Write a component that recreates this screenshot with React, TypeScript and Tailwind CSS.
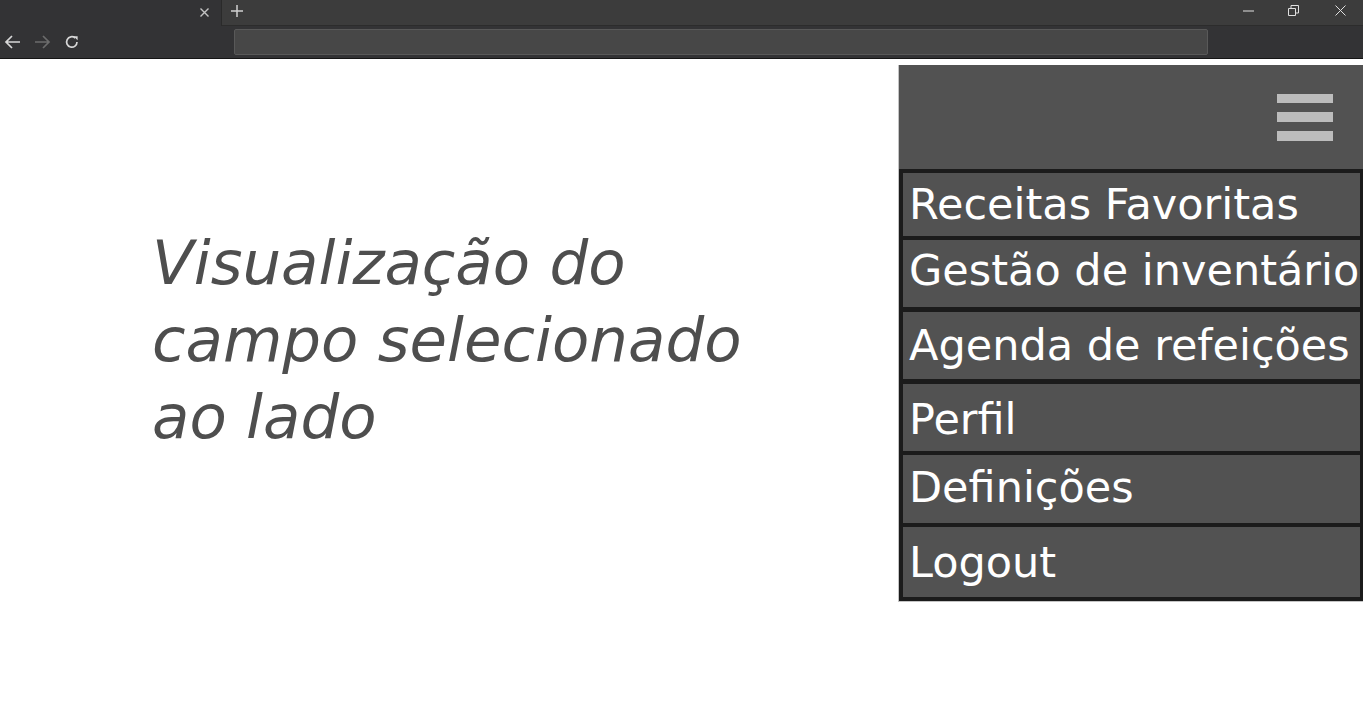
import React from "react";

const items: { label: string; h: string; pt: string; mt: string }[] = [
  { label: "Receitas Favoritas", h: "h-[63px]", pt: "pt-[6px]", mt: "" },
  { label: "Gestão de inventário", h: "h-[67px]", pt: "pt-[5px]", mt: "" },
  { label: "Agenda de refeições", h: "h-[67px]", pt: "pt-[8px]", mt: "mt-[1px]" },
  { label: "Perfil", h: "h-[67px]", pt: "pt-[10px]", mt: "mt-[1px]" },
  { label: "Definições", h: "h-[68px]", pt: "pt-[7px]", mt: "" },
  { label: "Logout", h: "h-[70px]", pt: "pt-[10px]", mt: "" },
];

function Chrome() {
  return (
    <div className="flex flex-col">
      <div className="flex h-[26px] bg-[#3c3c3c]">
        <div className="relative w-[222px] h-[26px] bg-[#333335] border-r border-[#2a2a2a]">
          <svg className="absolute left-[199px] top-[7px]" width="11" height="11" viewBox="0 0 11 11">
            <path d="M1.5 1.5 L9.5 9.5 M9.5 1.5 L1.5 9.5" stroke="#c4c4c4" strokeWidth="1.4" />
          </svg>
        </div>
        <div className="relative flex-1 border-b border-[#2c2c2c]">
          <svg className="absolute left-[8px] top-[4px]" width="14" height="14" viewBox="0 0 14 14">
            <path d="M7 1 V13 M1 7 H13" stroke="#d0d0d0" strokeWidth="1.5" />
          </svg>
          <svg className="absolute right-[109px] top-[10px]" width="11" height="2" viewBox="0 0 11 2">
            <path d="M0 1 H11" stroke="#e0e0e0" strokeWidth="1" />
          </svg>
          <svg className="absolute right-[64px] top-[5px]" width="11" height="11" viewBox="0 0 11 11">
            <path d="M0.5 3.5 H7.5 V10.5 H0.5 Z M3 3.5 V0.5 H10.5 V8 H7.5" stroke="#e0e0e0" strokeWidth="1" fill="none" />
          </svg>
          <svg className="absolute right-[17px] top-[5px]" width="11" height="11" viewBox="0 0 11 11">
            <path d="M0.5 0.5 L10.5 10.5 M10.5 0.5 L0.5 10.5" stroke="#e0e0e0" strokeWidth="1" />
          </svg>
        </div>
      </div>
      <div className="flex items-center h-[33px] bg-[#333335] border-b border-[#151515]">
        <div className="flex items-center w-[234px] shrink-0">
          <svg className="ml-[4px]" width="17" height="14" viewBox="0 0 17 14">
            <path d="M16 7 H2 M8 1 L2 7 L8 13" stroke="#d8d8d8" strokeWidth="1.7" fill="none" />
          </svg>
          <svg className="ml-[13px]" width="17" height="14" viewBox="0 0 17 14">
            <path d="M1 7 H15 M9 1 L15 7 L9 13" stroke="#6c6c6c" strokeWidth="1.7" fill="none" />
          </svg>
          <svg className="ml-[13px]" width="16" height="16" viewBox="0 0 16 16">
            <path d="M13 8 A5.2 5.2 0 1 1 11.2 4" stroke="#d8d8d8" strokeWidth="1.7" fill="none" />
            <path d="M9.5 2.2 L13.6 2.2 L13.6 6.3 Z" fill="#d8d8d8" />
          </svg>
        </div>
        <div className="w-[974px] h-[26px] rounded-[2px] bg-[#474747] border border-[#595959]" />
      </div>
    </div>
  );
}

export default function App() {
  return (
    <div className="w-[1363px] h-[725px] bg-white overflow-hidden flex flex-col" style={{ fontFamily: '"DejaVu Sans", Verdana, sans-serif' }}>
      <Chrome />
      <div className="flex flex-1 pt-[6px]">
        <div className="flex-1 pl-[152px] pt-[159px]">
          <p className="w-[640px] italic text-[61px] leading-[77px] text-[#4e4e4e]">
            Visualização do campo selecionado ao lado
          </p>
        </div>
        <div className="w-[465px] self-start flex flex-col border-l border-b border-[#c4c4c4]">
          <div className="h-[104px] bg-[#525252] flex justify-end pt-[29px] pr-[30px]">
            <div className="flex flex-col gap-[9px]">
              <div className="w-[56px] h-[9px] bg-[#bcbcbc]" />
              <div className="w-[56px] h-[10px] bg-[#bcbcbc]" />
              <div className="w-[56px] h-[10px] bg-[#bcbcbc]" />
            </div>
          </div>
          <div className="bg-[#1b1b1b] pl-[4px] pr-[3px] pt-[4px] pb-[4px] flex flex-col gap-[4px]">
            {items.map((it) => (
              <div
                key={it.label}
                className={`${it.h} ${it.pt} ${it.mt} bg-[#525252] pl-[6px] text-white text-[43px] leading-[50px] whitespace-nowrap overflow-hidden`}
              >
                {it.label}
              </div>
            ))}
          </div>
        </div>
      </div>
    </div>
  );
}
